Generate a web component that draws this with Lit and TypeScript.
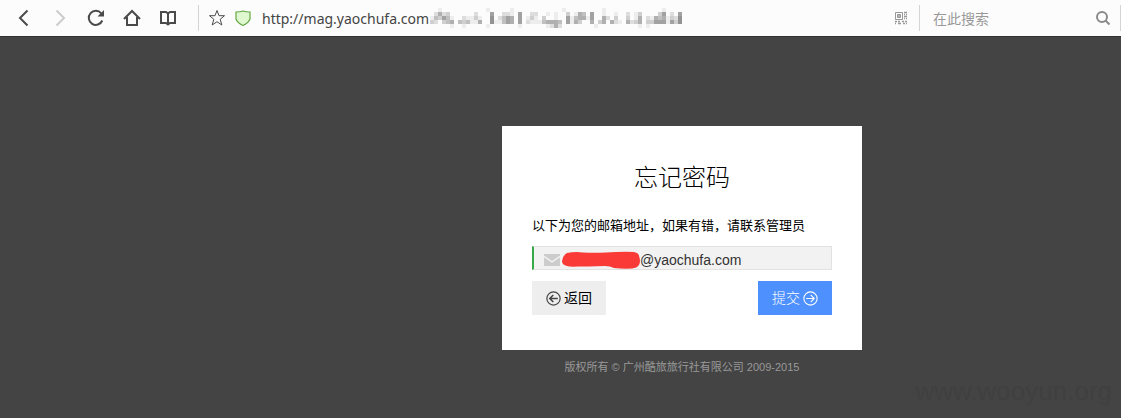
import { LitElement, html, svg, css } from "lit";
import { customElement } from "lit/decorators.js";

/* Darkness levels (0-9) of the pixelated part of the address, one digit per 4px cell. */
const MOSAIC = [
  "0010000000000010000010000000000001000000000100000000000000100000",
  "0252300000020006002210600220010100301540600100100201300003602060",
  "1436410021131007024650601310300100614551600520300301502154513270",
  "3203450434115007114650602111455540615300503505210523503366616370",
  "0000010010000010000000100000012520000000010000000000101000000000",
];

@customElement("pixel-strip")
export class PixelStrip extends LitElement {
  static styles = css`
    :host { display: block; }
    .strip { display: block; }
  `;
  render() {
    return html`<svg class="strip" width="256" height="20" viewBox="0 0 256 20" shape-rendering="crispEdges" aria-hidden="true">
      ${MOSAIC.map((row, y) =>
        [...row].map((d, x) =>
          d === "0"
            ? null
            : svg`<rect x=${x * 4} y=${y * 4} width="4" height="4" fill="#555" fill-opacity=${Number(d) * 0.09}></rect>`
        )
      )}
    </svg>`;
  }
}

@customElement("browser-bar")
export class BrowserBar extends LitElement {
  static styles = css`
    :host {
      display: flex;
      align-items: center;
      height: 36px;
      background: #fcfcfc;
      border-bottom: 1px solid #333;
      font-family: "Noto Sans", "Noto Sans CJK SC", sans-serif;
      color: #4a4a4a;
    }
    button {
      display: block;
      padding: 0;
      border: 0;
      background: none;
      color: inherit;
    }
    svg { display: block; fill: none; stroke: currentColor; }
    .nav { display: flex; gap: 16px; padding: 0 20px 0 14px; }
    .off { color: #ccc; }
    .line { width: 1px; height: 26px; background: #d4d4d4; }
    .marks { display: flex; gap: 8px; padding: 0 10px 0 9px; }
    .address { display: flex; flex: 1; align-items: center; min-width: 0; }
    .url {
      box-sizing: border-box;
      width: 168px;
      padding: 1px 0 0;
      border: 0;
      background: none;
      font: 14px/20px "Noto Sans", sans-serif;
      color: #444;
    }
    .qr { color: #999; margin-right: 10px; }
    .search { display: flex; align-items: center; width: 200px; box-sizing: border-box; padding: 0 9px 0 13px; }
    .query {
      flex: 1;
      min-width: 0;
      padding: 0;
      border: 0;
      background: none;
      font: 14px/20px "Noto Sans CJK SC", sans-serif;
      color: #444;
    }
    .query::placeholder { color: #999; opacity: 1; }
    .lens { color: #8a8a8a; }
  `;
  render() {
    return html`
      <nav class="nav">
        <button aria-label="后退">
          <svg width="20" height="20" viewBox="0 0 20 20" stroke-width="2"><path d="M13.500 2.500 6 10l7.500 7.500" /></svg>
        </button>
        <button class="off" aria-label="前进" disabled>
          <svg width="20" height="20" viewBox="0 0 20 20" stroke-width="2"><path d="M6.500 2.500 14 10l-7.500 7.500" /></svg>
        </button>
        <button aria-label="刷新">
          <svg width="20" height="20" viewBox="0 0 20 20" stroke-width="2">
            <path d="M16.300 12.500A7 7 0 1 1 15.300 5.500" /><path d="M18 2v6.500h-6.500z" fill="currentColor" stroke="none" />
          </svg>
        </button>
        <button aria-label="主页">
          <svg width="20" height="20" viewBox="0 0 20 20" stroke-width="2"><path d="M2 11 10 3l8 8M5 9v8h10V9" /></svg>
        </button>
        <button aria-label="收藏夹">
          <svg width="20" height="20" viewBox="0 0 20 20" stroke-width="2">
            <path d="M3 4h5l2 1.500L12 4h5v11h-5l-2 1.500L8 15H3zM10 5v12" />
          </svg>
        </button>
      </nav>
      <span class="line"></span>
      <div class="marks">
        <button aria-label="收藏">
          <svg width="18" height="18" viewBox="0 0 18 18" stroke-width="1">
            <path d="m9 1.500 2 5.200h5.500l-4.300 3.600L13.800 16 9 12.700 4.200 16l1.600-5.700L1.500 6.700H7z" />
          </svg>
        </button>
        <button aria-label="网站安全">
          <svg width="18" height="18" viewBox="0 0 18 18" stroke-width="1.200">
            <path d="M2 3q4.500 0 7-1 2.500 1 7 1v7q-1 3.500-7 6.500Q3 13.500 2 10z" fill="#e0f8cf" stroke="#64a844" />
          </svg>
        </button>
      </div>
      <div class="address">
        <input class="url" type="text" aria-label="地址" value="http://mag.yaochufa.com" />
        <pixel-strip></pixel-strip>
      </div>
      <button class="qr" aria-label="二维码">
        <svg width="16" height="16" viewBox="0 0 16 16">
          <path d="M2.500 2.500h7v7h-7z" stroke-width="1" />
          <path d="M4.500 6h3M11 2.500h3M11 4.500h1m1 0h1M11 6.500h3M11 8.500h1m1 0h1M2 11.500h2m1 0h2m2 0h2m1 0h2M2 13.500h1m2 0h3m2 0h2m1 0h1" stroke-width="1.300" />
          <path d="M4.500 4.500h3v3h-3z" stroke-width="1" />
        </svg>
      </button>
      <span class="line"></span>
      <div class="search">
        <input class="query" type="text" aria-label="搜索" placeholder="在此搜索" />
        <button class="lens" aria-label="搜索">
          <svg width="16" height="16" viewBox="0 0 16 16" stroke-width="2">
            <circle cx="7" cy="7" r="5" /><path d="m10.500 10.500 4 4" />
          </svg>
        </button>
      </div>
      <span class="line"></span>
    `;
  }
}

@customElement("app-root")
export class AppRoot extends LitElement {
  static styles = css`
    :host {
      display: flex;
      flex-direction: column;
      min-height: 100vh;
      position: relative;
      background: #444;
      font-family: "Liberation Sans", "Noto Sans CJK SC", sans-serif;
      color: #000;
    }
    .page {
      display: grid;
      grid-template-columns: 502fr 360px 259fr;
      padding-top: 89px;
    }
    .column { grid-column: 2; }
    .card { padding: 30px; background: #fff; }
    .title {
      margin: 0;
      padding: 2px 0 21px;
      text-align: center;
      font: 300 24px/36px "Noto Sans CJK SC", sans-serif;
    }
    .hint {
      display: block;
      margin-bottom: 9px;
      font-size: 13px;
      line-height: 22px;
    }
    .field {
      display: flex;
      align-items: center;
      box-sizing: border-box;
      height: 24px;
      margin-bottom: 11px;
      border: 1px solid #e2e2e2;
      border-left: 2px solid #35aa47;
      background: #f2f2f2;
      padding: 4px 0 0 10px;
    }
    .field svg { display: block; flex: none; }
    .scribble { margin: 0 0 0 2px; }
    .email {
      flex: 1;
      min-width: 0;
      padding: 0;
      border: 0;
      background: none;
      font: 14px/20px "Liberation Sans", sans-serif;
      color: #333;
    }
    .actions { display: flex; justify-content: space-between; padding-bottom: 5px; }
    .btn {
      display: flex;
      align-items: center;
      justify-content: center;
      gap: 3px;
      width: 74px;
      height: 34px;
      padding: 0 0 2px;
      border: 0;
      background: #eee;
      font: 14px/20px "Noto Sans CJK SC", sans-serif;
      color: #000;
    }
    .btn svg { fill: none; stroke: #444; margin-top: 2px; }
    .primary { background: #4d90fe; color: #fff; font-weight: 300; }
    .primary svg { stroke: #fff; }
    .copyright {
      margin: 0;
      padding-top: 9px;
      text-align: center;
      font-size: 11px;
      line-height: 16px;
      color: #999;
    }
    .watermark {
      position: absolute;
      right: 9px;
      bottom: 12px;
      font-size: 26px;
      line-height: 30px;
      color: #404040;
    }
  `;
  render() {
    return html`
      <browser-bar></browser-bar>
      <main class="page">
        <div class="column">
          <form class="card" @submit=${(e: Event) => e.preventDefault()}>
            <h1 class="title">忘记密码</h1>
            <label class="hint" for="email">以下为您的邮箱地址，如果有错，请联系管理员</label>
            <div class="field">
              <svg width="16" height="14" viewBox="0 0 16 14" fill="#ccc" aria-hidden="true">
                <path d="M0 1h16v1.500L8 8 0 2.500zM0 4.300l8 5.400 8-5.400V13H0z" />
              </svg>
              <svg class="scribble" width="78" height="18" viewBox="0 0 78 18" aria-hidden="true">
                <path fill="#fa3a36" d="M0 10Q1 4 5 2q8-1.500 16-.500 12 .500 23 0Q60 .500 72 1q5 1 5 4 2 5 0 9-2 3-7 3.500-9 .500-18-.500-4-2-9-2-19 .500-27 .500-8 .500-11-.500Q0 14 0 10z" />
              </svg>
              <input class="email" id="email" type="text" value="@yaochufa.com" />
            </div>
            <div class="actions">
              <button class="btn" type="button">
                <svg width="15" height="15" viewBox="0 0 14 14" stroke-width="1.100" aria-hidden="true">
                  <circle cx="7" cy="7" r="6.200" /><path d="M11 7H3.500M6.800 3.700 3.500 7l3.300 3.300" stroke-width="1.400" />
                </svg>
                返回
              </button>
              <button class="btn primary" type="submit">
                提交
                <svg width="15" height="15" viewBox="0 0 14 14" stroke-width="1" aria-hidden="true">
                  <circle cx="7" cy="7" r="6.200" /><path d="M3 7h7.500M7.200 3.700 10.500 7l-3.300 3.300" />
                </svg>
              </button>
            </div>
          </form>
          <p class="copyright">版权所有 © 广州酷旅旅行社有限公司 2009-2015</p>
        </div>
      </main>
      <span class="watermark">www.wooyun.org</span>
    `;
  }
}
